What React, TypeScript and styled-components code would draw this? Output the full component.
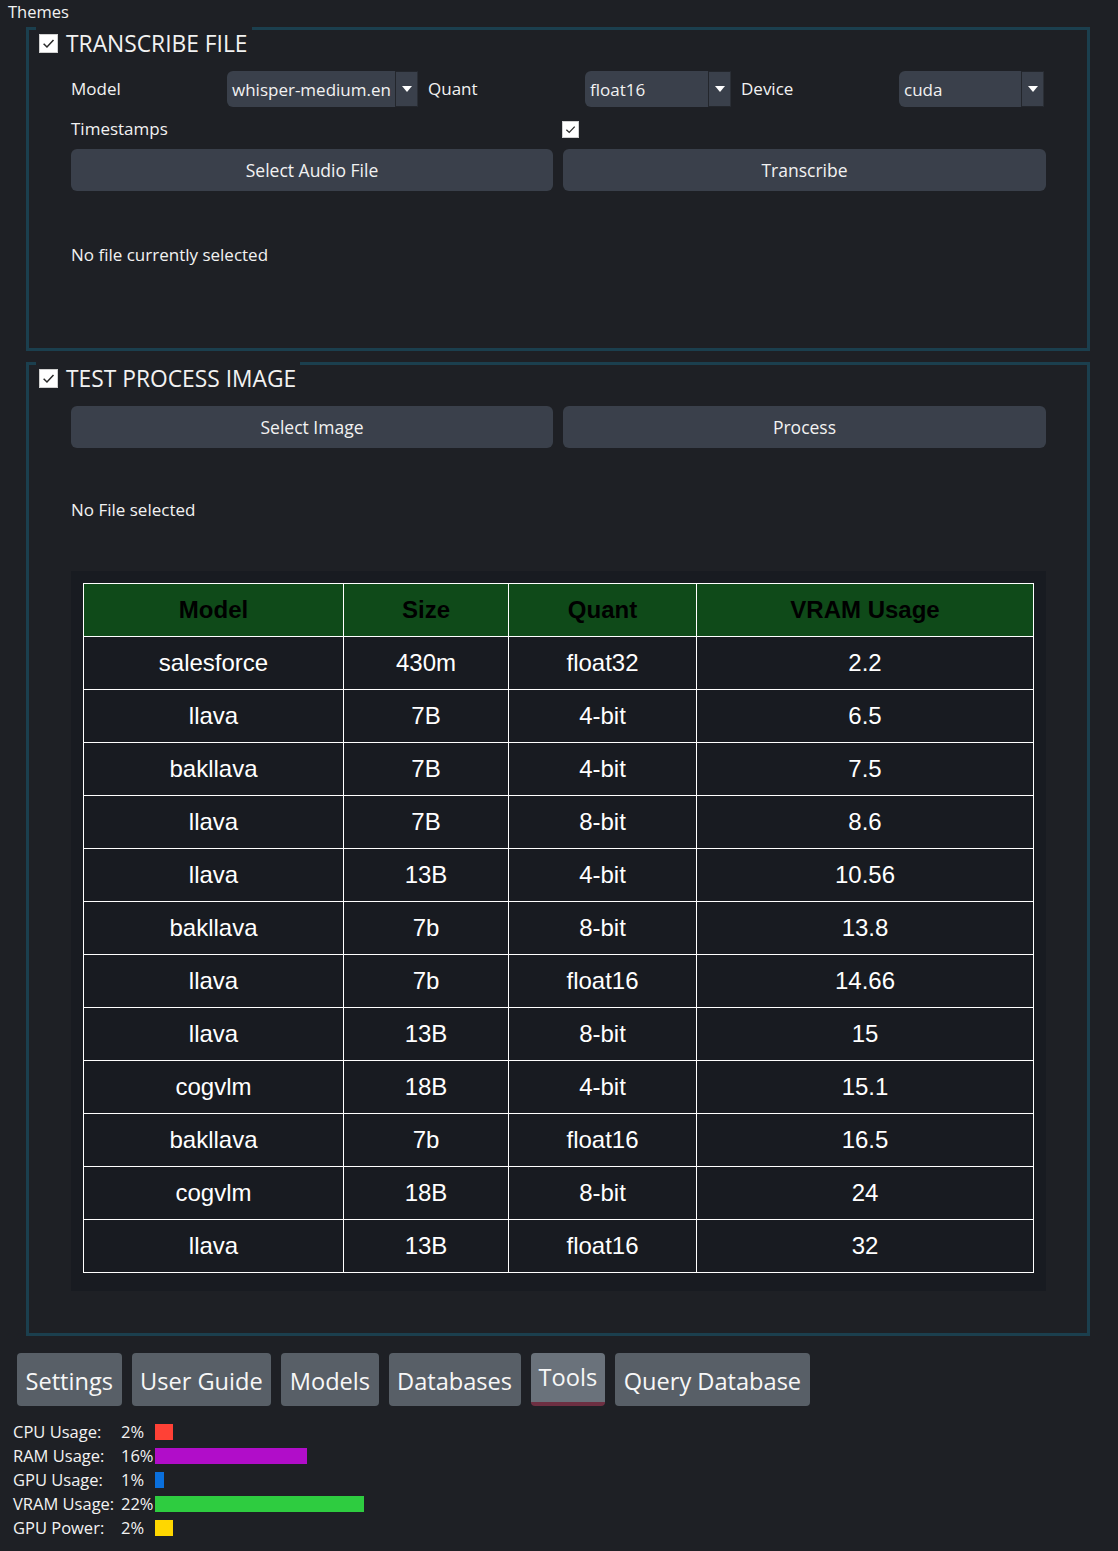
import React from "react";
import styled, { createGlobalStyle } from "styled-components";

const GlobalStyle = createGlobalStyle`
  html, body { margin: 0; padding: 0; background: #1e2025; }
  body {
    font-family: "Open Sans", "Noto Sans", sans-serif;
    color: #f2f2f2;
  }
  * { box-sizing: border-box; }
`;

const Page = styled.div`
  width: 1118px;
  min-height: 1551px;
  background: #1e2025;
  padding: 0 28px 0 0;
`;

const ThemesLabel = styled.div`
  font-size: 16.5px;
  line-height: 24px;
  height: 24px;
  padding-left: 8px;
`;

const GroupBox = styled.section<{ $mt: number; $pb: number }>`
  margin: ${(p) => p.$mt}px 0 0 26px;
  border: 3px solid #1b3f4e;
  padding: 0 41px ${(p) => p.$pb}px 42px;
`;

const GroupTitle = styled.div`
  display: flex;
  align-items: center;
  gap: 8px;
  width: fit-content;
  height: 30px;
  margin: -3px 0 0 -35px;
  padding: 2px 4px 0 3px;
  background: #1e2025;
  font-size: 22.8px;
`;

const CheckBoxBox = styled.span<{ $size: number }>`
  display: inline-flex;
  align-items: center;
  justify-content: center;
  width: ${(p) => p.$size}px;
  height: ${(p) => p.$size}px;
  background: #ffffff;
  border: 1px solid #d0d0d0;
  flex: none;
`;

const CheckBox = ({ size = 18 }: { size?: number }) => (
  <CheckBoxBox $size={size}>
    <svg width={size - 6} height={size - 6} viewBox="0 0 12 12">
      <path d="M1.5 6.2 L4.6 9.2 L10.6 2.8" fill="none" stroke="#2a2a2a" strokeWidth="1.4" />
    </svg>
  </CheckBoxBox>
);

const FormGrid = styled.div`
  display: grid;
  grid-template-columns: 146px 191px 147px 146px 148px 145px;
  column-gap: 10px;
  align-items: center;
  margin-top: 14px;
`;

const Label = styled.span`
  font-size: 17px;
  line-height: 24px;
`;

const ComboBox = styled.div`
  display: flex;
  height: 36px;
  background: #3a404b;
  border-radius: 6px 0 0 6px;
  font-size: 17px;
`;

const ComboText = styled.span`
  flex: 1;
  display: flex;
  align-items: center;
  padding-left: 5px;
  white-space: nowrap;
  overflow: hidden;
`;

const ComboArrow = styled.span`
  width: 23px;
  flex: none;
  display: flex;
  align-items: center;
  justify-content: center;
  border: 1px solid #23262c;
  border-right-color: #2b2f36;
  background: #3a404b;
`;

const Combo = ({ value }: { value: string }) => (
  <ComboBox>
    <ComboText>{value}</ComboText>
    <ComboArrow>
      <svg width="10" height="6" viewBox="0 0 10 6">
        <path d="M0 0 H10 L5 6 Z" fill="#ffffff" />
      </svg>
    </ComboArrow>
  </ComboBox>
);

const HalfRow = styled.div`
  display: grid;
  grid-template-columns: 482px 483px;
  column-gap: 10px;
  align-items: center;
`;

const TimestampRow = styled(HalfRow)`
  height: 22px;
  margin-top: 10px;
`;

const CheckCell = styled.div`
  margin-left: -1px;
  display: flex;
`;

const ButtonRow = styled(HalfRow)<{ $mt: number }>`
  margin-top: ${(p) => p.$mt}px;
`;

const Button = styled.button`
  height: 42px;
  border: none;
  border-radius: 6px;
  background: #3a404b;
  color: #f2f2f2;
  font-family: "Open Sans", "Noto Sans", sans-serif;
  font-size: 17.5px;
  padding: 0;
`;

const Status = styled.div<{ $mt: number }>`
  margin-top: ${(p) => p.$mt}px;
  font-size: 17px;
  line-height: 24px;
`;

const TablePanel = styled.div`
  margin-top: 49px;
  background: #181b21;
  padding: 12px 13px 18px 12px;
`;

const Table = styled.table`
  width: 950px;
  border-collapse: collapse;
  font-family: "Liberation Sans", Arial, sans-serif;
  font-size: 24px;
  table-layout: fixed;
`;

const Th = styled.th`
  height: 53px;
  background: #0f4a19;
  color: #000000;
  font-weight: bold;
  border: 1px solid #ffffff;
  text-align: center;
  padding: 0;
`;

const Td = styled.td`
  height: 53px;
  background: #181b21;
  color: #ffffff;
  border: 1px solid #ffffff;
  text-align: center;
  padding: 0;
`;

const TabBar = styled.div`
  display: flex;
  gap: 10px;
  margin: 17px 0 0 17px;
`;

const Tab = styled.div<{ $active?: boolean }>`
  height: 53px;
  padding: 2px ${(p) => (p.$active ? "8px" : "8.5px")} ${(p) => (p.$active ? "4px" : "0")};
  display: flex;
  align-items: center;
  font-size: 23.6px;
  border-radius: 4px;
  background: ${(p) => (p.$active ? "#6a727b" : "#585f67")};
  color: #f7f7f7;
  border-bottom: ${(p) => (p.$active ? "4px solid #6d2f42" : "none")};
`;

const Monitor = styled.div`
  display: grid;
  grid-template-columns: 108px 34px auto;
  grid-auto-rows: 24px;
  align-items: center;
  margin: 14px 0 0 13px;
  font-size: 16.5px;
  width: fit-content;
`;

const MonText = styled.span`
  white-space: nowrap;
  line-height: 24px;
`;

const Bar = styled.span<{ $color: string }>`
  display: block;
  height: 16px;
  background: ${(p) => p.$color};
`;

const rows: [string, string, string, string][] = [
  ["salesforce", "430m", "float32", "2.2"],
  ["llava", "7B", "4-bit", "6.5"],
  ["bakllava", "7B", "4-bit", "7.5"],
  ["llava", "7B", "8-bit", "8.6"],
  ["llava", "13B", "4-bit", "10.56"],
  ["bakllava", "7b", "8-bit", "13.8"],
  ["llava", "7b", "float16", "14.66"],
  ["llava", "13B", "8-bit", "15"],
  ["cogvlm", "18B", "4-bit", "15.1"],
  ["bakllava", "7b", "float16", "16.5"],
  ["cogvlm", "18B", "8-bit", "24"],
  ["llava", "13B", "float16", "32"],
];

const monitors = [
  { label: "CPU Usage:", value: "2%", width: 18, color: "#ff4136" },
  { label: "RAM Usage:", value: "16%", width: 152, color: "#b10dc9" },
  { label: "GPU Usage:", value: "1%", width: 9, color: "#0a6fdc" },
  { label: "VRAM Usage:", value: "22%", width: 209, color: "#2ecc40" },
  { label: "GPU Power:", value: "2%", width: 18, color: "#ffd700" },
];

const tabs = ["Settings", "User Guide", "Models", "Databases", "Tools", "Query Database"];

export default function App() {
  return (
    <Page>
      <GlobalStyle />
      <ThemesLabel>Themes</ThemesLabel>

      <GroupBox $mt={3} $pb={81}>
        <GroupTitle>
          <CheckBox size={19} />
          <span>TRANSCRIBE FILE</span>
        </GroupTitle>
        <FormGrid>
          <Label>Model</Label>
          <Combo value="whisper-medium.en" />
          <Label>Quant</Label>
          <Combo value="float16" />
          <Label>Device</Label>
          <Combo value="cuda" />
        </FormGrid>
        <TimestampRow>
          <Label>Timestamps</Label>
          <CheckCell>
            <CheckBox size={17} />
          </CheckCell>
        </TimestampRow>
        <ButtonRow $mt={10}>
          <Button>Select Audio File</Button>
          <Button>Transcribe</Button>
        </ButtonRow>
        <Status $mt={52}>No file currently selected</Status>
      </GroupBox>

      <GroupBox $mt={11} $pb={42}>
        <GroupTitle>
          <CheckBox size={19} />
          <span>TEST PROCESS IMAGE</span>
        </GroupTitle>
        <ButtonRow $mt={14}>
          <Button>Select Image</Button>
          <Button>Process</Button>
        </ButtonRow>
        <Status $mt={50}>No File selected</Status>
        <TablePanel>
          <Table>
            <colgroup>
              <col style={{ width: 260 }} />
              <col style={{ width: 165 }} />
              <col style={{ width: 188 }} />
              <col style={{ width: 337 }} />
            </colgroup>
            <thead>
              <tr>
                <Th>Model</Th>
                <Th>Size</Th>
                <Th>Quant</Th>
                <Th>VRAM Usage</Th>
              </tr>
            </thead>
            <tbody>
              {rows.map((r, i) => (
                <tr key={i}>
                  {r.map((c, j) => (
                    <Td key={j}>{c}</Td>
                  ))}
                </tr>
              ))}
            </tbody>
          </Table>
        </TablePanel>
      </GroupBox>

      <TabBar>
        {tabs.map((t) => (
          <Tab key={t} $active={t === "Tools"}>
            {t}
          </Tab>
        ))}
      </TabBar>

      <Monitor>
        {monitors.map((m) => (
          <React.Fragment key={m.label}>
            <MonText>{m.label}</MonText>
            <MonText>{m.value}</MonText>
            <Bar $color={m.color} style={{ width: m.width }} />
          </React.Fragment>
        ))}
      </Monitor>
    </Page>
  );
}
